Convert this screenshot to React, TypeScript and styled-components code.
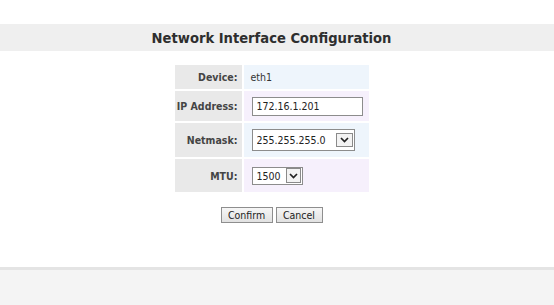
import React from 'react';
import styled, { createGlobalStyle } from 'styled-components';

const GlobalStyle = createGlobalStyle`
  html, body {
    margin: 0;
    padding: 0;
    background: #fff;
  }
  body {
    font-family: "DejaVu Sans Condensed", "DejaVu Sans", sans-serif;
    font-stretch: condensed;
    color: #333;
  }
`

const Page = styled.div`
  display: flex;
  flex-direction: column;
  height: 305px;
  padding-top: 24px;
  box-sizing: border-box;
`

const TitleBar = styled.div`
  height: 27px;
  background: #efefef;
  display: flex;
  align-items: center;
  justify-content: center;
  padding-right: 11px;
`

const Title = styled.h1`
  margin: 0;
  font-size: 14.6px;
  font-weight: bold;
  color: #2e2e2e;
`

const Main = styled.div`
  flex: 1;
  display: flex;
  flex-direction: column;
  align-items: center;
  padding: 14px 11px 0 0;
`

const Form = styled.div`
  display: grid;
  grid-template-columns: 67px 125px;
  gap: 2px;
`

const Label = styled.div<{ h: number }>`
  height: ${p => p.h}px;
  background: #e9e9e9;
  display: flex;
  align-items: center;
  justify-content: flex-end;
  padding-right: 4px;
  font-size: 10.5px;
  font-weight: bold;
  color: #444;
`

const Value = styled.div<{ h: number; tint: 'blue' | 'lilac' }>`
  height: ${p => p.h}px;
  background: ${p => (p.tint === 'blue' ? '#eef5fc' : '#f6f0fc')};
  display: flex;
  align-items: center;
  padding-left: 7px;
  font-size: 10.5px;
  color: #333;
`

const TextInput = styled.input`
  box-sizing: border-box;
  width: 111px;
  height: 19px;
  margin-left: 1px;
  border: 1px solid #8c8c8c;
  padding: 0 4px;
  font-family: inherit;
  font-stretch: condensed;
  font-size: 10.5px;
  color: #222;
  background: #fff;
  outline: none;
`

const SelectBox = styled.div<{ w: number; h: number }>`
  box-sizing: border-box;
  margin-left: 1px;
  width: ${p => p.w}px;
  height: ${p => p.h}px;
  display: flex;
  align-items: center;
  border: 1px solid #8c8c8c;
  background: #fff;
  padding: 0 1px 0 0;
`

const NativeSelect = styled.select`
  flex: 1;
  min-width: 0;
  appearance: none;
  -webkit-appearance: none;
  border: none;
  background: transparent;
  padding: 0 0 0 4px;
  font-family: inherit;
  font-stretch: condensed;
  font-size: 10.5px;
  color: #222;
  outline: none;
`

const ArrowBox = styled.span<{ w: number; h: number }>`
  box-sizing: border-box;
  width: ${p => p.w}px;
  height: ${p => p.h}px;
  border: 1px solid #8a8a8a;
  background: #f3f3f3;
  display: flex;
  align-items: center;
  justify-content: center;
  pointer-events: none;
`

const Buttons = styled.div`
  display: flex;
  gap: 3px;
  margin-top: 15px;
`

const Button = styled.button<{ w: number }>`
  box-sizing: border-box;
  width: ${p => p.w}px;
  height: 16px;
  padding: 0;
  border: 1px solid #8e8e8e;
  background: linear-gradient(#f6f6f6, #e1e1e1);
  font-family: inherit;
  font-stretch: condensed;
  font-size: 10.5px;
  color: #222;
  line-height: 14px;
`

const Footer = styled.div`
  height: 35px;
  border-top: 3px solid #e4e4e4;
  background: #f4f4f4;
`

const Chevron = () => (
  <svg width="9" height="6" viewBox="0 0 9 6">
    <path d="M1 1 L4.5 4.5 L8 1" fill="none" stroke="#222" strokeWidth="1.7" />
  </svg>
)

type SelectProps = {
  w: number
  h: number
  aw: number
  ah: number
  value: string
  options: string[]
}

const Select: React.FC<SelectProps> = ({ w, h, aw, ah, value, options }) => (
  <SelectBox w={w} h={h}>
    <NativeSelect defaultValue={value}>
      {options.map(o => (
        <option key={o} value={o}>{o}</option>
      ))}
    </NativeSelect>
    <ArrowBox w={aw} h={ah}>
      <Chevron />
    </ArrowBox>
  </SelectBox>
)

const App: React.FC = () => {
  return (
    <>
      <GlobalStyle />
      <Page>
        <TitleBar>
          <Title>Network Interface Configuration</Title>
        </TitleBar>
        <Main>
          <Form>
            <Label h={24}>Device:</Label>
            <Value h={24} tint="blue">eth1</Value>

            <Label h={30}>IP Address:</Label>
            <Value h={30} tint="lilac">
              <TextInput defaultValue="172.16.1.201" />
            </Value>

            <Label h={34}>Netmask:</Label>
            <Value h={34} tint="blue">
              <Select
                w={103}
                h={22}
                aw={17}
                ah={14}
                value="255.255.255.0"
                options={['255.0.0.0', '255.255.0.0', '255.255.255.0']}
              />
            </Value>

            <Label h={33}>MTU:</Label>
            <Value h={33} tint="lilac">
              <Select w={51} h={18} aw={15} ah={15} value="1500" options={['1500', '9000']} />
            </Value>
          </Form>
          <Buttons>
            <Button w={52}>Confirm</Button>
            <Button w={47}>Cancel</Button>
          </Buttons>
        </Main>
        <Footer />
      </Page>
    </>
  );
};

export default App;
